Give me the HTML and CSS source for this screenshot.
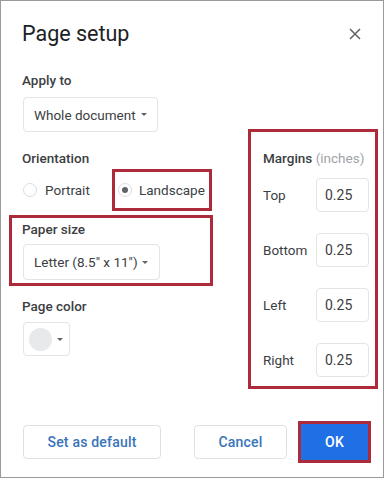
FILE: index.html
```html
<!DOCTYPE html>
<html>
<head>
<meta charset="utf-8">
<link rel="stylesheet" href="styles.css">
</head>
<body>
<div class="frame">
  <div class="header">
    <div class="title">Page setup</div>
    <svg class="close" width="12" height="12" viewBox="0 0 12 12"><path d="M1 1L11 11M11 1L1 11" stroke="#5f6368" stroke-width="1.5" fill="none"/></svg>
  </div>
  <div class="body">
    <div class="left">
      <div class="label">Apply to</div>
      <div class="select select-apply"><span>Whole document</span><span class="caret"></span></div>
      <div class="label label-orient">Orientation</div>
      <div class="radios">
        <div class="radio-item portrait"><span class="radio"></span><span>Portrait</span></div>
        <div class="radio-item landscape hl"><span class="radio checked"></span><span>Landscape</span></div>
      </div>
      <div class="paper hl">
        <div class="label">Paper size</div>
        <div class="select select-paper"><span>Letter (8.5" x 11")</span><span class="caret"></span></div>
      </div>
      <div class="label label-color">Page color</div>
      <div class="color-btn"><span class="swatch"></span><span class="caret"></span></div>
    </div>
    <div class="right hl">
      <div class="label">Margins <span class="muted">(inches)</span></div>
      <div class="rows">
        <div class="row"><span>Top</span><div class="input">0.25</div></div>
        <div class="row"><span>Bottom</span><div class="input">0.25</div></div>
        <div class="row"><span>Left</span><div class="input">0.25</div></div>
        <div class="row"><span>Right</span><div class="input">0.25</div></div>
      </div>
    </div>
  </div>
  <div class="footer">
    <div class="btn btn-default">Set as default</div>
    <div class="btn btn-cancel">Cancel</div>
    <div class="btn btn-ok">OK</div>
  </div>
</div>
</body>
</html>
```
FILE: styles.css
```css
* { box-sizing: border-box; }
html, body { margin: 0; padding: 0; background: #fff; }
body { font-family: Roboto, "Liberation Sans", sans-serif; color: #3c4043; font-size: 13.5px; }

.frame {
  width: 384px;
  height: 478px;
  border: 1px solid #9a9a9a;
  display: flex;
  flex-direction: column;
  background: #fff;
}

.header {
  display: flex;
  justify-content: space-between;
  align-items: center;
  padding: 19px 22px 0 21px;
  height: 47px;
}
.title { font-size: 21.5px; line-height: 28px; color: #202124; }
.close { margin-top: -1px; }

.body {
  display: flex;
  align-items: flex-start;
  margin-top: 22px;
  padding-left: 21px;
}
.left { width: 204px; flex: none; display: flex; flex-direction: column; align-items: flex-start; }
.label { font-weight: 500; line-height: 20px; color: #3c4043; white-space: nowrap; }
.muted { color: #a0a4a8; font-weight: 400; }

.select {
  margin-top: 7px;
  margin-left: 1px;
  height: 35px;
  border: 1px solid #e3e4e6;
  border-radius: 4px;
  display: flex;
  align-items: center;
  justify-content: space-between;
  padding: 0 10px 0 10px;
  white-space: nowrap;
}
.select-apply { width: 135px; }
.select-paper { width: 137px; height: 36px; margin-top: 5px; padding-right: 11px; }
.caret {
  width: 0; height: 0;
  border-left: 3px solid transparent;
  border-right: 3px solid transparent;
  border-top: 3.5px solid #5f6368;
}

.label-orient { margin-top: 16px; }
.radios { display: flex; align-items: center; margin-top: 1px; }
.radio-item { display: flex; align-items: center; gap: 8px; white-space: nowrap; }
.portrait { width: 90px; padding-left: 1px; }
.radio {
  width: 14px; height: 14px;
  border: 1.5px solid #dcdde0;
  border-radius: 50%;
  display: flex; align-items: center; justify-content: center;
  flex: none;
}
.radio.checked::after {
  content: "";
  width: 6px; height: 6px;
  border-radius: 50%;
  background: #5f6368;
}

.hl { border: 3px solid #ad2a3b; }
.landscape { width: 100px; height: 42px; padding-left: 3px; gap: 7px; }

.paper {
  margin-top: 4px;
  margin-left: -13px;
  width: 204px;
  padding: 1px 0 3px 10px;
  display: flex; flex-direction: column; align-items: flex-start;
}

.label-color { margin-top: 10px; }
.color-btn {
  margin-top: 6px;
  margin-left: 1px;
  width: 47px; height: 34px;
  border: 1px solid #e3e4e6;
  border-radius: 4px;
  display: flex; align-items: center;
  padding-left: 5px;
  gap: 5px;
}
.swatch { width: 23px; height: 23px; border-radius: 50%; background: #e8e9eb; flex: none; }

.right {
  margin-top: 59px;
  margin-left: 22px;
  width: 130px;
  padding: 16px 6px 9px 12px;
}
.rows { margin-top: 10px; display: flex; flex-direction: column; gap: 21px; }
.row { display: flex; align-items: center; justify-content: space-between; height: 34px; }
.input {
  width: 53px; height: 34px;
  border: 1px solid #e3e4e6;
  border-radius: 4px;
  display: flex; align-items: center;
  padding-left: 8px;
  font-size: 14px;
}

.footer {
  margin-top: auto;
  display: flex;
  align-items: center;
  padding: 0 15px 17px 22px;
  height: 53px;
  font-size: 14px;
}
.btn {
  height: 34px;
  border: 1px solid #dfe0e2;
  border-radius: 4px;
  display: flex; align-items: center; justify-content: center;
  font-weight: 500;
  color: #3874ba;
  letter-spacing: 0.2px;
}
.btn-default { width: 138px; }
.btn-cancel { width: 93px; margin-left: auto; }
.btn-ok {
  width: 67px; height: 36px;
  margin-left: 14px;
  background: #1f6fe5;
  border: none;
  color: #fff;
  outline: 3px solid #ad2a3b;
  border-radius: 0;
}
```
